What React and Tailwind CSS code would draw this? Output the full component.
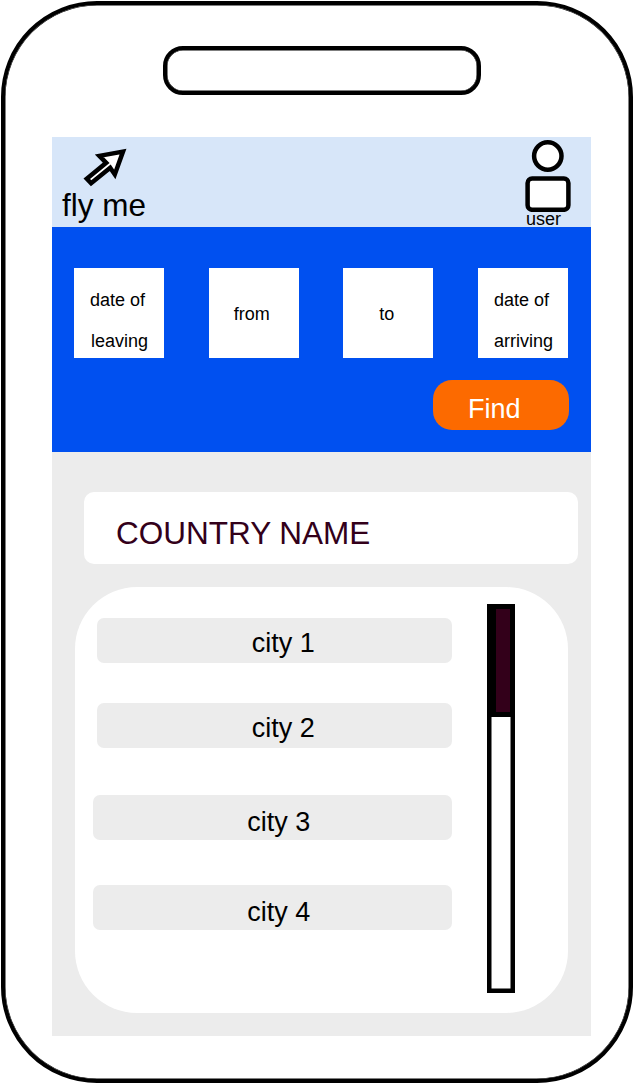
const cities = [
  { name: "city 1", row: "ml-[22px] w-[355px] h-[45px] pt-[3px] pl-[155px]" },
  { name: "city 2", row: "ml-[22px] w-[355px] h-[45px] mt-[40.5px] pt-[2.5px] pl-[155px]" },
  { name: "city 3", row: "ml-[18px] w-[359px] h-[45px] mt-[47px] pt-[4.5px] pl-[154.5px]" },
  { name: "city 4", row: "ml-[18px] w-[359px] h-[45px] mt-[44.5px] pt-[5px] pl-[154.5px]" },
];

function PlaneArrow() {
  return (
    <svg className="ml-[30px] block h-[42px] w-[46px]" viewBox="82 147 46 42">
      <path
        d="M86.8 178.7 L106.2 162.8 L99.4 155.9 L123 151.6 L114.8 174.4 L110.2 167.7 L91.1 183.2 Z"
        fill="#fff"
        stroke="#000"
        strokeWidth="4.5"
        strokeMiterlimit="10"
      />
    </svg>
  );
}

function UserIcon() {
  return (
    <svg className="block h-[72px] w-[48px]" viewBox="524 140 48 72">
      <circle cx="547.8" cy="156" r="13.7" fill="#fff" stroke="#000" strokeWidth="4.5" />
      <rect x="527.6" y="178.4" width="40.8" height="31.4" rx="4.5" fill="#fff" stroke="#000" strokeWidth="4.5" />
    </svg>
  );
}

function Header() {
  return (
    <header className="flex h-[90px] justify-between bg-[#d7e6f9]">
      <div className="pt-[10px]">
        <PlaneArrow />
        <div className="-mt-[2px] pl-[10px] text-[31.5px] leading-[36px]">fly me</div>
      </div>
      <div className="w-[67px] pt-[3px]">
        <UserIcon />
        <div className="-mt-[3px] pl-[2px] text-[18px] leading-[20px]">user</div>
      </div>
    </header>
  );
}

function SearchPanel() {
  return (
    <section className="flex h-[225px] flex-col bg-[#0050f0] pt-[41px] pr-[23px] pl-[22px]">
      <div className="flex justify-between text-[18px]">
        <div className="h-[90px] w-[90px] bg-white pt-[12px] leading-[41px]">
          <div className="pl-[16px]">date of</div>
          <div className="pl-[17px]">leaving</div>
        </div>
        <div className="h-[90px] w-[90px] bg-white pt-px pl-[25px] leading-[90px]">from</div>
        <div className="h-[90px] w-[90px] bg-white pt-px pl-[36px] leading-[90px]">to</div>
        <div className="h-[90px] w-[90px] bg-white pt-[12px] leading-[41px]">
          <div className="pl-[16px]">date of</div>
          <div className="pl-[16px]">arriving</div>
        </div>
      </div>
      <button className="mt-[22px] -mr-[0.5px] h-[50px] w-[135.5px] self-end rounded-[19px] bg-[#fc6a00] pt-[8px] pr-[13px] text-[27px] leading-[42px] text-white">
        Find
      </button>
    </section>
  );
}

function ScrollBar() {
  return (
    <div className="mt-[17.5px] ml-[35.5px] h-[388.5px] w-[27.5px] border-[4px] border-black bg-white shadow-[inset_0_0_0_0.5px_#000]">
      <div className="-mt-[4px] h-[113px] w-[23.5px] border-[5px] border-black bg-[#33001a]" />
    </div>
  );
}

function Results() {
  return (
    <section className="h-[584px] bg-[#ececec] pt-[40px]">
      <h1 className="ml-[31.5px] h-[72px] w-[494px] rounded-[10px] bg-white pt-[5px] pl-[32.5px] text-[31.5px] leading-[72px] text-[#33001a]">
        COUNTRY NAME
      </h1>
      <div className="mt-[22.7px] ml-[22.7px] flex h-[426.3px] w-[493.8px] rounded-[62px] bg-white">
        <ul className="pt-[31.2px] text-[27px] leading-[45px]">
          {cities.map((c) => (
            <li key={c.name} className={`rounded-[7px] bg-[#ececec] ${c.row}`}>
              {c.name}
            </li>
          ))}
        </ul>
        <ScrollBar />
      </div>
    </section>
  );
}

export default function App() {
  return (
    <div className="h-[1086px] w-[635px] overflow-hidden bg-white pt-px pl-px font-['Liberation_Sans',Arial,sans-serif] text-black">
      <div className="h-[1081.5px] w-[632px] rounded-[96px] border-[4px] border-black pt-[41px] shadow-[inset_0_0_0_0.5px_#000]">
        <div className="ml-[157.5px] h-[49px] w-[318.5px] rounded-[20px] border-[4px] border-black shadow-[inset_0_0_0_0.5px_#000]" />
        <main className="mt-[42px] ml-[47px] w-[539px]">
          <Header />
          <SearchPanel />
          <Results />
        </main>
      </div>
    </div>
  );
}
